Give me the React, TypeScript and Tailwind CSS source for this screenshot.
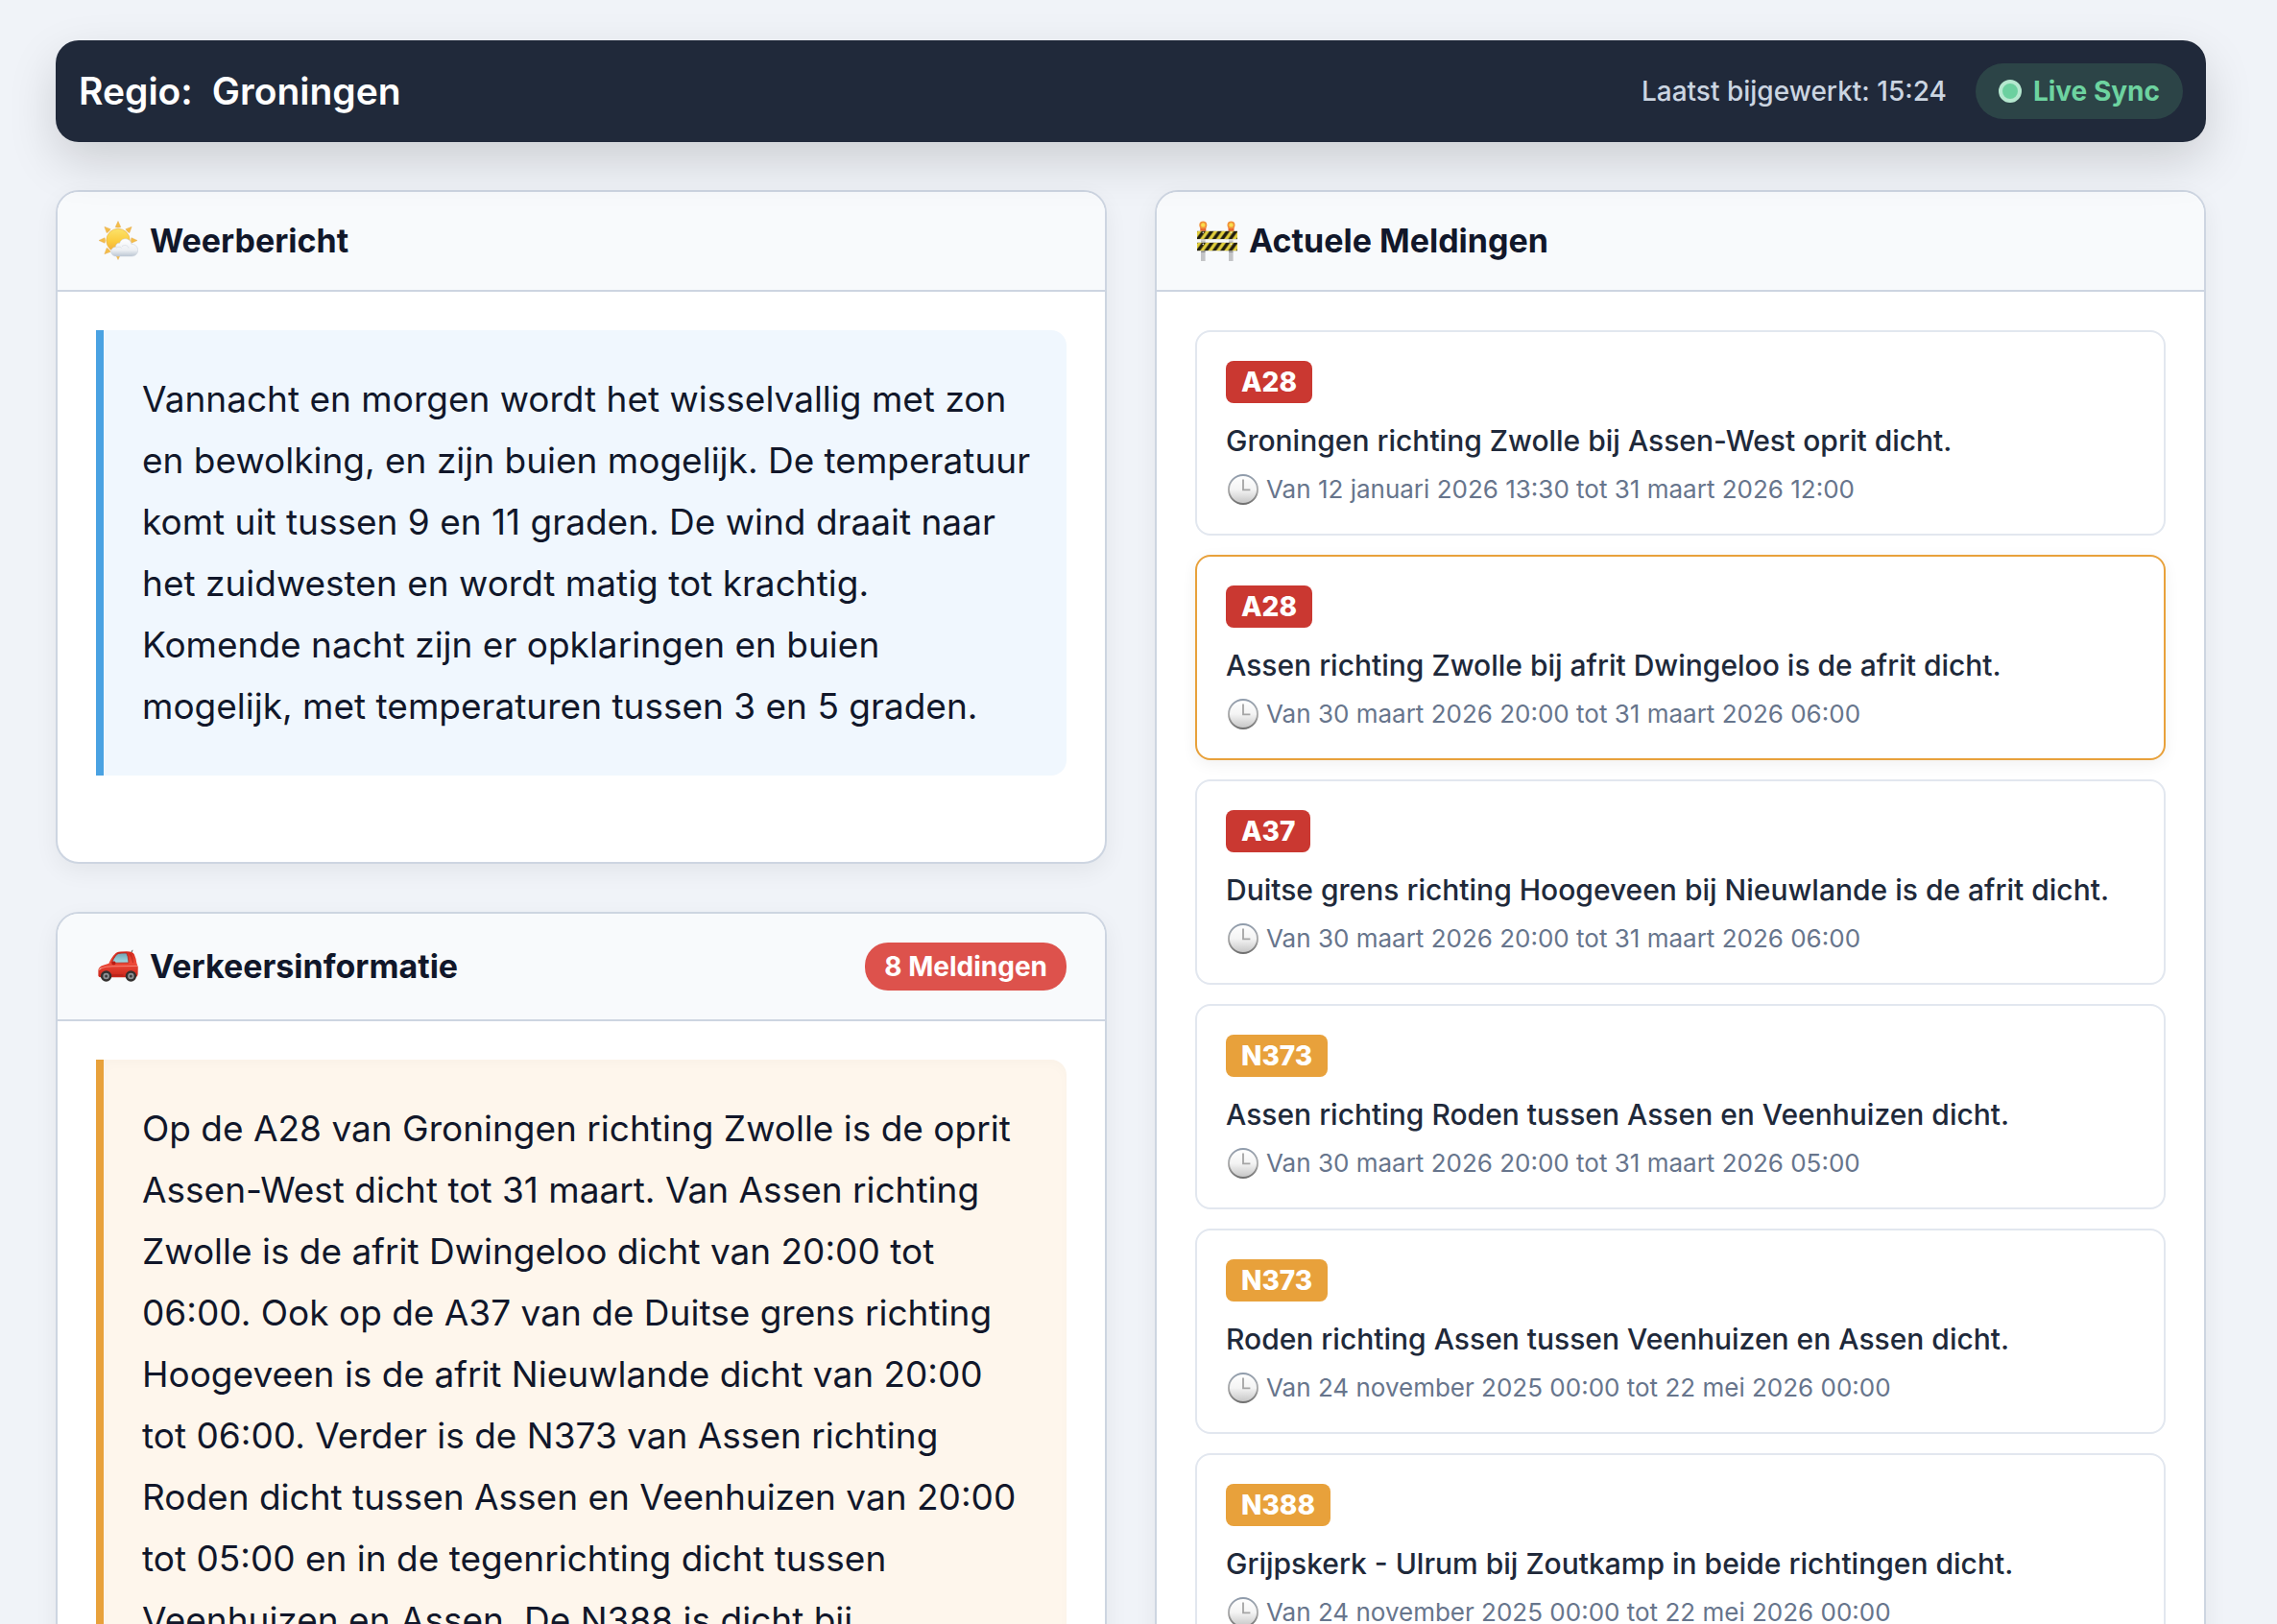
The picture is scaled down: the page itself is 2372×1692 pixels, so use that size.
import { ReactNode } from 'react';

interface Melding {
  road: string;
  title: string;
  period: string;
  active?: boolean;
}

const weather = `Vannacht en morgen wordt het wisselvallig met zon
en bewolking, en zijn buien mogelijk. De temperatuur
komt uit tussen 9 en 11 graden. De wind draait naar
het zuidwesten en wordt matig tot krachtig.
Komende nacht zijn er opklaringen en buien
mogelijk, met temperaturen tussen 3 en 5 graden.`;

const traffic = `Op de A28 van Groningen richting Zwolle is de oprit
Assen-West dicht tot 31 maart. Van Assen richting
Zwolle is de afrit Dwingeloo dicht van 20:00 tot
06:00. Ook op de A37 van de Duitse grens richting
Hoogeveen is de afrit Nieuwlande dicht van 20:00
tot 06:00. Verder is de N373 van Assen richting
Roden dicht tussen Assen en Veenhuizen van 20:00
tot 05:00 en in de tegenrichting dicht tussen
Veenhuizen en Assen. De N388 is dicht bij`;

const meldingen: Melding[] = [
  {
    road: 'A28',
    title: 'Groningen richting Zwolle bij Assen-West oprit dicht.',
    period: 'Van 12 januari 2026 13:30 tot 31 maart 2026 12:00',
  },
  {
    road: 'A28',
    title: 'Assen richting Zwolle bij afrit Dwingeloo is de afrit dicht.',
    period: 'Van 30 maart 2026 20:00 tot 31 maart 2026 06:00',
    active: true,
  },
  {
    road: 'A37',
    title: 'Duitse grens richting Hoogeveen bij Nieuwlande is de afrit dicht.',
    period: 'Van 30 maart 2026 20:00 tot 31 maart 2026 06:00',
  },
  {
    road: 'N373',
    title: 'Assen richting Roden tussen Assen en Veenhuizen dicht.',
    period: 'Van 30 maart 2026 20:00 tot 31 maart 2026 05:00',
  },
  {
    road: 'N373',
    title: 'Roden richting Assen tussen Veenhuizen en Assen dicht.',
    period: 'Van 24 november 2025 00:00 tot 22 mei 2026 00:00',
  },
  {
    road: 'N388',
    title: 'Grijpskerk - Ulrum bij Zoutkamp in beide richtingen dicht.',
    period: 'Van 24 november 2025 00:00 tot 22 mei 2026 00:00',
  },
];

function SunIcon() {
  return (
    <svg viewBox="-2 0 44 42" className="h-[42px] w-11 shrink-0" aria-hidden="true">
      <defs>
        <linearGradient id="sun" x1="0" y1="0" x2="0" y2="1">
          <stop offset="0" stopColor="#fbe36a" />
          <stop offset="0.55" stopColor="#fbcb3e" />
          <stop offset="1" stopColor="#f0a93a" />
        </linearGradient>
        <linearGradient id="cloud" x1="0" y1="0" x2="0" y2="1">
          <stop offset="0" stopColor="#ffffff" />
          <stop offset="0.65" stopColor="#eceff3" />
          <stop offset="1" stopColor="#bcc6d3" />
        </linearGradient>
      </defs>
      <g fill="#f4bd48" stroke="#e3a64a" strokeWidth="0.4">
        {[0, 45, 90, 135, 180, 225, 270, 315].map((deg) => (
          <path key={deg} d="M21 0.5 L23.8 6.6 Q21 7.6 18.2 6.6 Z" transform={`rotate(${deg} 21 20.5)`} />
        ))}
      </g>
      <circle cx="21" cy="20.5" r="12.2" fill="url(#sun)" stroke="#eab046" strokeWidth="0.6" />
      <path
        d="M19.5 37 C15.5 37 13.7 34.5 13.7 32 C13.7 29.4 15.7 27.3 18.6 27.2 C18.4 24.4 20.4 22.8 22.6 23.2 C23.6 20.3 26 18.8 28.6 18.8 C31.8 18.8 34.4 21 34.8 24.4 C38.6 24.2 41.6 26.8 41.6 30.6 C41.6 34.6 38.8 37 35 37 Z"
        fill="url(#cloud)"
        stroke="#c5cdd8"
        strokeWidth="0.5"
      />
      <path d="M19 28.2 C21 26.6 23.4 27 24.6 28.4 M25 26.6 C28 24.6 31.4 25.6 32 28.4" fill="none" stroke="#d5dae2" strokeWidth="0.7" />
    </svg>
  );
}

function CarIcon() {
  return (
    <svg viewBox="-2 0 44 42" className="h-[42px] w-11 shrink-0" aria-hidden="true">
      <defs>
        <linearGradient id="car" x1="0" y1="0" x2="0" y2="1">
          <stop offset="0" stopColor="#d4281c" />
          <stop offset="0.45" stopColor="#ee4a38" />
          <stop offset="1" stopColor="#c9241a" />
        </linearGradient>
        <linearGradient id="glass" x1="0" y1="0" x2="0" y2="1">
          <stop offset="0" stopColor="#6fa3b2" />
          <stop offset="1" stopColor="#a5dde6" />
        </linearGradient>
      </defs>
      <path d="M34 6.6 Q35.6 6.6 36 3.8" fill="none" stroke="#55504e" strokeWidth="1" />
      <path
        d="M0.4 30.5 L0.4 24.8 Q0.9 21.2 5.4 19.8 L11.4 17.8 C13.4 13 16.6 8 20 6.2 Q22.4 5.2 30 5.2 Q36.4 5.2 37.8 8.2 Q39.8 12.6 40.4 17.4 L41.8 21.6 L41.6 29 Q41.4 32.2 38 32.2 L3 32.2 Q0.4 32.2 0.4 30.5 Z"
        fill="url(#car)"
      />
      <path d="M14.6 17.2 C16.4 12.2 18.8 8.4 21.6 7.4 Q24 6.8 29.8 7 Q31.4 9.4 32 17 Z" fill="url(#glass)" stroke="#a31d16" strokeWidth="0.7" />
      <path d="M33.6 7.6 Q36 11.4 36.6 17.2" fill="none" stroke="#a31d16" strokeWidth="0.6" />
      <path d="M1.4 23.4 Q8 20.6 15 20.8 L41 20.4" fill="none" stroke="#f8897c" strokeWidth="0.9" />
      <path d="M0.6 25.2 Q2.6 24.2 4 22.4 Q2 22.4 0.6 25.2 Z" fill="#f5d9c6" />
      <rect x="14.4" y="15.6" width="4" height="3.6" rx="1.4" fill="#b91c14" />
      <path d="M13.6 30 L26.4 30" stroke="#a31d16" strokeWidth="0.8" />
      {[8.6, 34.4].map((cx) => (
        <g key={cx}>
          <circle cx={cx} cy="31" r="5.7" fill="#33302f" />
          <circle cx={cx} cy="31" r="3.2" fill="#8f9296" />
          <circle cx={cx} cy="31" r="1.5" fill="#3d3c3d" />
        </g>
      ))}
    </svg>
  );
}

function BarrierIcon() {
  return (
    <svg viewBox="-2 0 44 42" className="h-[42px] w-11 shrink-0" aria-hidden="true">
      <defs>
        <pattern id="stripes" width="8.4" height="9" patternUnits="userSpaceOnUse">
          <rect width="8.4" height="9" fill="#e2cf3c" />
          <path d="M-1.4 9 L5 0 L9.2 0 L2.8 9 Z M7 9 L13.4 0 L17.6 0 L11.2 9 Z M-9.8 9 L-3.4 0 L0.8 0 L-5.6 9 Z" fill="#1f1c10" />
        </pattern>
      </defs>
      <path d="M4 12 H8.6 V42 H4 Z M33 12 H37.6 V42 H33 Z" fill="#c3c4c6" />
      <path d="M4.2 32.4 H8.4 M33.2 32.4 H37.4" stroke="#8e8f92" strokeWidth="1.4" />
      {[6.3, 35.5].map((cx) => (
        <g key={cx}>
          <rect x={cx - 3} y="6.4" width="6" height="4.4" fill="#e8622a" />
          <circle cx={cx} cy="4.4" r="4" fill="#f0913a" />
          <circle cx={cx} cy="4.4" r="2.2" fill="#fbdc4c" />
        </g>
      ))}
      <g>
        <svg x="0" y="10.4" width="42" height="9">
          <rect width="42" height="9" rx="0.6" fill="url(#stripes)" />
        </svg>
        <svg x="0" y="22.6" width="42" height="9">
          <rect width="42" height="9" rx="0.6" fill="url(#stripes)" />
        </svg>
      </g>
      <path d="M0.4 20 H41.6" stroke="#f3f0e2" strokeWidth="0.8" />
      <g fill="#e4e4e0">
        <circle cx="6.3" cy="12.2" r="0.8" />
        <circle cx="35.5" cy="12.2" r="0.8" />
        <circle cx="6.3" cy="24.4" r="0.8" />
        <circle cx="35.5" cy="24.4" r="0.8" />
      </g>
    </svg>
  );
}

function ClockIcon() {
  return (
    <svg viewBox="-2 0 34 32" className="h-8 w-[34px] shrink-0" aria-hidden="true">
      <defs>
        <linearGradient id="face" x1="0" y1="0" x2="0" y2="1">
          <stop offset="0" stopColor="#ffffff" />
          <stop offset="0.5" stopColor="#f4f4f4" />
          <stop offset="1" stopColor="#c4c4c4" />
        </linearGradient>
        <linearGradient id="rim" x1="0" y1="0" x2="0" y2="1">
          <stop offset="0" stopColor="#8f9bab" />
          <stop offset="0.5" stopColor="#acacac" />
          <stop offset="1" stopColor="#6f6f6f" />
        </linearGradient>
      </defs>
      <circle cx="16" cy="16" r="15" fill="url(#face)" stroke="url(#rim)" strokeWidth="1.9" />
      <path d="M16 5.4 V16.4 H23.4" fill="none" stroke="#a4a4a4" strokeWidth="1.8" />
    </svg>
  );
}

function Card({ icon, title, badge, children }: { icon: ReactNode; title: string; badge?: string; children: ReactNode }) {
  return (
    <section className="overflow-hidden rounded-3xl border-2 border-[#cdd5e1] bg-white shadow-[0_8px_24px_rgba(0,0,0,0.06)]">
      <div className="flex items-center justify-between border-b-2 border-[#cdd5e1] bg-[#f8fafc] px-10 py-[30px]">
        <h2 className="flex items-center gap-3 text-[34px] leading-[42px] font-bold text-[#11172a]">
          {icon}
          {title}
        </h2>
        {badge && (
          <span className="rounded-3xl bg-[#dd524c] px-5 text-[28px] leading-[50px] font-bold text-white">{badge}</span>
        )}
      </div>
      {children}
    </section>
  );
}

function MeldingItem({ item }: { item: Melding }) {
  return (
    <li
      className={`flex flex-col items-start rounded-2xl border-2 bg-white p-[30px] ${
        item.active ? 'border-[#e8a13b] shadow-[0_4px_16px_rgba(0,0,0,0.06)]' : 'border-[#e2e7ef]'
      }`}
    >
      <span
        className={`rounded-lg px-4 text-[28px] leading-[44px] font-extrabold text-white ${
          item.road.startsWith('A') ? 'bg-[#ca3831]' : 'bg-[#e8a13b]'
        }`}
      >
        {item.road}
      </span>
      <h3 className="mt-4 text-[30px] leading-[46px] font-medium text-[#20293a]">{item.title}</h3>
      <p className="mt-3 flex items-center gap-2 text-[26px] leading-[32px] text-[#67758c]">
        <ClockIcon />
        {item.period}
      </p>
    </li>
  );
}

export default function App() {
  return (
    <div className="h-screen overflow-hidden bg-[#f0f3f8] pr-4 font-['Inter',sans-serif]">
      <div className="mx-auto max-w-[2240px] pt-[42px]">
        <header className="relative z-10 flex items-center justify-between rounded-3xl bg-[#20293a] p-6 shadow-[0_20px_50px_rgba(0,0,0,0.15)]">
          <h1 className="flex gap-5 text-[39px] leading-[58px] font-semibold text-white">
            <span>Regio:</span>
            <span>Groningen</span>
          </h1>
          <div className="flex items-center gap-[30px]">
            <span className="text-[28px] font-medium text-[#cbd5e1]">Laatst bijgewerkt: 15:24</span>
            <div className="flex items-center gap-3 rounded-full bg-[#2c4447] px-6 text-[28px] leading-[58px] font-bold text-[#6dd3a0]">
              <span className="size-6 rounded-full border-4 border-[#b5e8cf] bg-[#6bd09f]" />
              Live Sync
            </div>
          </div>
        </header>

        <main className="mt-[50px] grid grid-cols-2 items-start gap-[50px]">
          <div className="flex flex-col gap-[50px]">
            <Card icon={<SunIcon />} title="Weerbericht">
              <div className="px-10 pt-10 pb-[90px]">
                <p className="rounded-r-2xl border-l-8 border-[#4aa2e2] bg-[#f0f7fe] p-10 text-[37px] leading-[64px] whitespace-pre text-[#11172a]">
                  {weather}
                </p>
              </div>
            </Card>
            <Card icon={<CarIcon />} title="Verkeersinformatie" badge="8 Meldingen">
              <div className="p-10">
                <p className="rounded-r-2xl border-l-8 border-[#e8a13b] bg-[#fef6ec] p-10 text-[37px] leading-[64px] whitespace-pre text-[#11172a] shadow-[inset_0_4px_12px_rgba(0,0,0,0.02)]">
                  {traffic}
                </p>
              </div>
            </Card>
          </div>
          <Card icon={<BarrierIcon />} title="Actuele Meldingen">
            <ul className="flex flex-col gap-5 p-10">
              {meldingen.map((item) => (
                <MeldingItem key={item.title} item={item} />
              ))}
            </ul>
          </Card>
        </main>
      </div>
    </div>
  );
}
